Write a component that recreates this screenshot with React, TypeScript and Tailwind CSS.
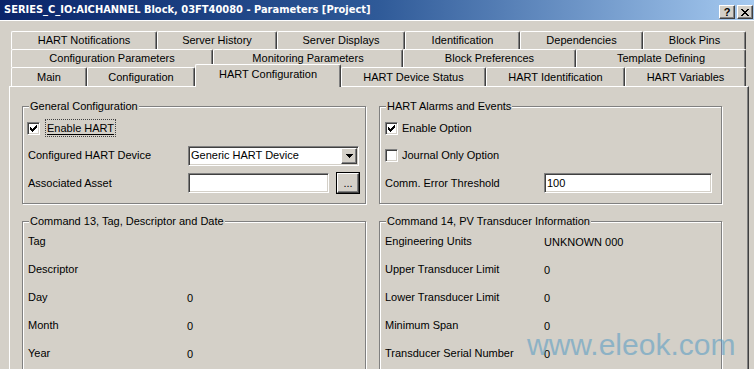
import React from 'react';

const TAB_ROWS = [
  [
    { name: 'HART Notifications', w: 'w-[146px]' },
    { name: 'Server History', w: 'w-[120px]' },
    { name: 'Server Displays', w: 'w-[128px]' },
    { name: 'Identification', w: 'w-[115px]' },
    { name: 'Dependencies', w: 'w-[123px]' },
    { name: 'Block Pins', w: 'w-[103px]' },
  ],
  [
    { name: 'Configuration Parameters', w: 'w-[202px]' },
    { name: 'Monitoring Parameters', w: 'w-[190px]' },
    { name: 'Block Preferences', w: 'w-[173px]' },
    { name: 'Template Defining', w: 'w-[170px]' },
  ],
  [
    { name: 'Main', w: 'w-[76px]' },
    { name: 'Configuration', w: 'w-[108px]' },
    { name: 'HART Configuration', w: 'w-[146px]', active: true },
    { name: 'HART Device Status', w: 'w-[145px]' },
    { name: 'HART Identification', w: 'w-[139px]' },
    { name: 'HART Variables', w: 'w-[121px]' },
  ],
];

const CMD13 = [
  { label: 'Tag', value: '' },
  { label: 'Descriptor', value: '' },
  { label: 'Day', value: '0' },
  { label: 'Month', value: '0' },
  { label: 'Year', value: '0' },
];

const CMD14 = [
  { label: 'Engineering Units', value: 'UNKNOWN 000' },
  { label: 'Upper Transducer Limit', value: '0' },
  { label: 'Lower Transducer Limit', value: '0' },
  { label: 'Minimum Span', value: '0' },
  { label: 'Transducer Serial Number', value: '0' },
];

const sunken =
  'bg-white border border-t-[#808080] border-l-[#808080] border-b-white border-r-white shadow-[inset_1px_1px_0_#404040,inset_-1px_-1px_0_#d4d0c8]';
const raised =
  'bg-[#d4d0c8] border border-t-white border-l-white border-b-[#404040] border-r-[#404040] shadow-[inset_-1px_-1px_0_#808080]';

function CheckBox({ checked }: { checked?: boolean }) {
  return (
    <span className={`w-[13px] h-[13px] shrink-0 flex items-center justify-center ${sunken}`}>
      {checked && (
        <svg width="7" height="7" viewBox="0 0 7 7" shapeRendering="crispEdges">
          <path d="M0 2h1v1h1v1h1v-1h1v-1h1v-1h1v-1h1v3h-1v1h-1v1h-1v1h-1v1h-1v-1h-1v-1h-1v-1h-1z" fill="#000" />
        </svg>
      )}
    </span>
  );
}

function GroupBox({ title, className, children }: { title: string; className: string; children: React.ReactNode }) {
  return (
    <div className={`relative border border-[#808080] shadow-[inset_1px_1px_0_#fff,1px_1px_0_#fff] ${className}`}>
      <span className="absolute left-[6px] -top-[8px] px-[1px] bg-[#d4d0c8] leading-[14px]">{title}</span>
      {children}
    </div>
  );
}

function InfoRows({ rows }: { rows: { label: string; value: string }[] }) {
  return (
    <div className="pt-[5px] pl-[5px]">
      {rows.map((r) => (
        <div key={r.label} className="h-[28px] flex items-center">
          <span className="w-[159px]">{r.label}</span>
          <span className="mt-[2px]">{r.value}</span>
        </div>
      ))}
    </div>
  );
}

export default function App() {
  return (
    <div className="relative w-[754px] h-[369px] overflow-hidden bg-[#d4d0c8] text-[11px] text-black font-['Liberation_Sans',Arial,sans-serif]">
      {/* title bar */}
      <div className="h-[20px] flex items-center justify-between pl-[4px] pr-[1px] bg-gradient-to-r from-[#0a246a] via-[#2f5a98] to-[#a6caf0]">
        <span className="text-white font-bold text-[11px] font-['DejaVu_Sans_Condensed','DejaVu_Sans',sans-serif]">
          SERIES_C_IO:AICHANNEL Block, 03FT40080 - Parameters [Project]
        </span>
        <div className="flex gap-[2px] self-end mb-[1px]">
          <button className={`w-[16px] h-[14px] flex items-center justify-center font-bold text-[11px] leading-none ${raised}`}>?</button>
          <button className={`w-[16px] h-[14px] flex items-center justify-center ${raised}`}>
            <svg width="8" height="7" viewBox="0 0 8 7" shapeRendering="crispEdges">
              <path d="M0 0h2l2 2.5L6 0h2L5 3.5 8 7H6L4 4.5 2 7H0l3-3.5z" fill="#000" />
            </svg>
          </button>
        </div>
      </div>
      <div className="h-px bg-white" />

      {/* tabs */}
      <div className="ml-[11px] mt-[10px] w-[735px]">
        {TAB_ROWS.map((row, i) => (
          <div key={i} className={`flex ${i === 2 ? 'h-[19px]' : 'h-[18px]'}`}>
            {row.map((t) =>
              t.active ? (
                <div
                  key={t.name}
                  className={`${t.w} relative z-10 -mt-[3px] h-[23px] pb-[3px] flex items-center justify-center bg-[#d4d0c8] border-t border-l border-white rounded-tl-[2px] rounded-tr-[2px] border-r border-r-[#404040] shadow-[inset_-1px_0_0_#808080]`}
                >
                  {t.name}
                </div>
              ) : (
                <div
                  key={t.name}
                  className={`${t.w} flex items-center justify-center border-t border-l border-white rounded-tl-[2px] rounded-tr-[2px] border-r border-r-[#404040] shadow-[inset_-1px_0_0_#808080]`}
                >
                  {t.name}
                </div>
              )
            )}
          </div>
        ))}
      </div>

      {/* page */}
      <div className="ml-[9px] w-[740px] h-[300px] border-t border-l border-white border-r border-r-[#404040] shadow-[inset_-1px_0_0_#808080] pt-[19px] pl-[12px]">
        <div className="flex gap-[13px]">
          <GroupBox title="General Configuration" className="w-[344px] h-[98px]">
            <div className="pt-[7px] pl-[4px]">
              <div className="h-[28px] flex items-center">
                <CheckBox checked />
                <span className="ml-[6px] px-[1px] outline outline-1 outline-dotted outline-[#404040] underline underline-offset-2">Enable HART</span>
              </div>
              <div className="h-[27px] flex items-center pl-[1px]">
                <span className="w-[160px]">Configured HART Device</span>
                <div className={`w-[171px] h-[20px] flex items-center justify-between ${sunken}`}>
                  <span className="pl-[2px]">Generic HART Device</span>
                  <span className={`w-[16px] h-[16px] mr-[1px] flex items-center justify-center ${raised}`}>
                    <svg width="7" height="4" viewBox="0 0 7 4" shapeRendering="crispEdges">
                      <path d="M0 0h7L3.5 4z" fill="#000" />
                    </svg>
                  </span>
                </div>
              </div>
              <div className="h-[28px] flex items-center pl-[1px]">
                <span className="w-[160px]">Associated Asset</span>
                <div className={`w-[141px] h-[20px] ${sunken}`} />
                <button className={`ml-[8px] w-[22px] h-[20px] flex items-end justify-center pb-[3px] leading-none ${raised} outline outline-1 outline-black`}>...</button>
              </div>
            </div>
          </GroupBox>

          <GroupBox title="HART Alarms and Events" className="w-[343px] h-[98px]">
            <div className="pt-[7px] pl-[5px]">
              <div className="h-[28px] flex items-center">
                <CheckBox checked />
                <span className="ml-[4px]">Enable Option</span>
              </div>
              <div className="h-[27px] flex items-center">
                <CheckBox />
                <span className="ml-[4px]">Journal Only Option</span>
              </div>
              <div className="h-[28px] flex items-center">
                <span className="w-[159px]">Comm. Error Threshold</span>
                <div className={`w-[168px] h-[20px] flex items-center pl-[2px] ${sunken}`}>100</div>
              </div>
            </div>
          </GroupBox>
        </div>

        <div className="flex gap-[13px] mt-[17px]">
          <GroupBox title="Command 13, Tag, Descriptor and Date" className="w-[344px] h-[160px]">
            <InfoRows rows={CMD13} />
          </GroupBox>
          <GroupBox title="Command 14, PV Transducer Information" className="w-[343px] h-[160px]">
            <InfoRows rows={CMD14} />
          </GroupBox>
        </div>
      </div>

      {/* watermark */}
      <span className="absolute left-[527px] top-[330px] text-[30px] leading-none text-[#5f9fc4] opacity-60 pointer-events-none">
        www.eleok.com
      </span>
    </div>
  );
}
